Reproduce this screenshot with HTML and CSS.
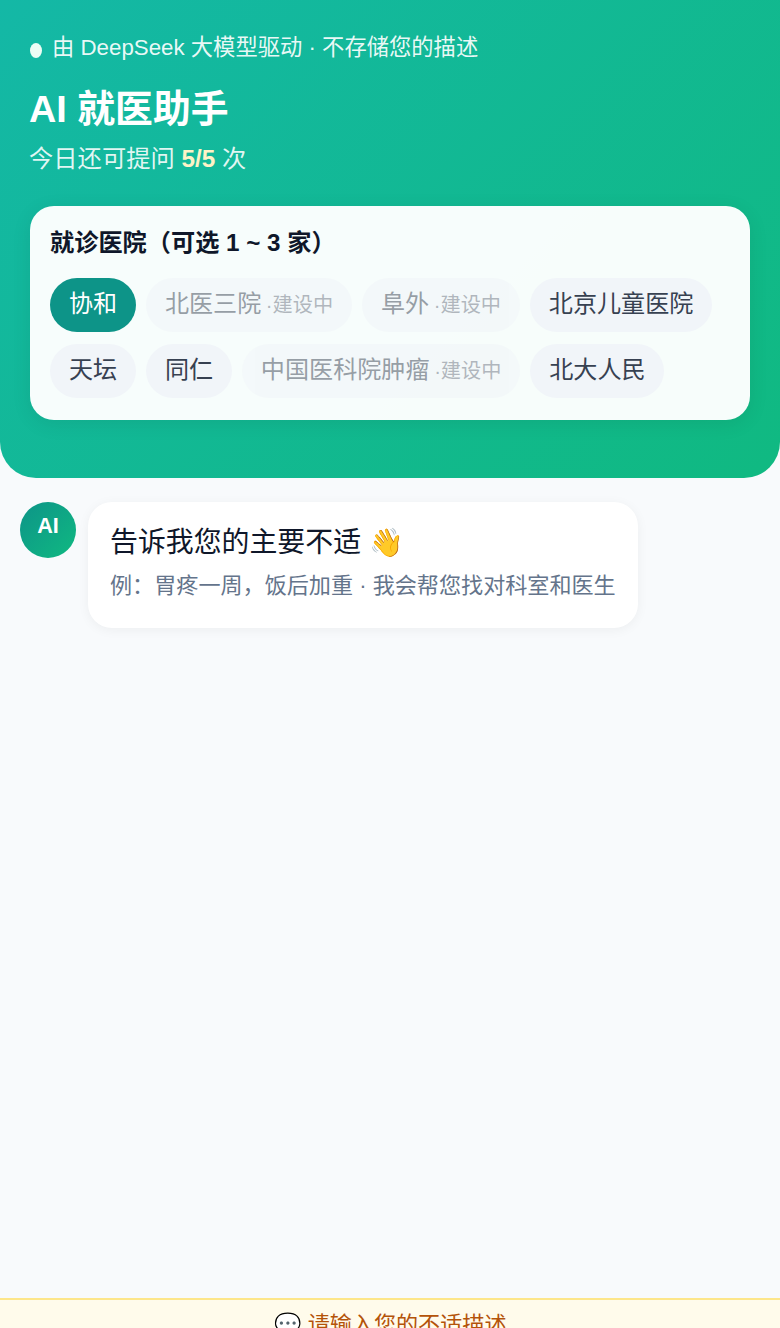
FILE: index.html
```html
<!DOCTYPE html>
<html lang="zh-CN">
<head>
  <meta charset="UTF-8" />
  <meta name="viewport" content="width=device-width, initial-scale=1.0" />
  <title>AI 就医助手</title>
  <link rel="stylesheet" href="styles.css">
</head>
<body>
  <header class="hero">
    <div class="hero-note"><span class="dot"></span><span>由 DeepSeek 大模型驱动 · 不存储您的描述</span></div>
    <h1 class="hero-title">AI 就医助手</h1>
    <p class="hero-quota">今日还可提问 <b>5/5</b> 次</p>

    <section class="hospital-card">
      <div class="hospital-label">就诊医院（可选 1 ~ 3 家）</div>
      <div class="chips">
        <span class="chip active">协和</span>
        <span class="chip off">北医三院<small>·建设中</small></span>
        <span class="chip off">阜外<small>·建设中</small></span>
        <span class="chip">北京儿童医院</span>
        <span class="chip">天坛</span>
        <span class="chip">同仁</span>
        <span class="chip off">中国医科院肿瘤<small>·建设中</small></span>
        <span class="chip">北大人民</span>
      </div>
    </section>
  </header>

  <main class="chat">
    <div class="msg">
      <div class="avatar">AI</div>
      <div class="bubble">
        <div class="bubble-title">告诉我您的主要不适 👋</div>
        <div class="bubble-hint">例：胃疼一周，饭后加重 · 我会帮您找对科室和医生</div>
      </div>
    </div>
  </main>

  <footer class="notice">💬 请输入您的不适描述</footer>
</body>
</html>
```

FILE: styles.css
```css
*,*::before,*::after{box-sizing:border-box;margin:0;padding:0;}
html,body{height:100%;overflow:hidden;}
body{
  font-family:"Liberation Sans","Noto Sans CJK SC",sans-serif;
  background:#f8fafc;
  color:#0f172a;
}
.hero{
  height:478px;
  padding:30px 30px 0;
  background:linear-gradient(135deg,#14b8a6,#10b981);
  border-radius:0 0 36px 36px;
  color:#fff;
}
.hero-note{
  display:flex;align-items:center;gap:10px;
  font-size:22.3px;line-height:36px;
  color:rgba(255,255,255,.92);
}
.dot{
  width:12px;height:15px;
  margin-top:4px;
  border-radius:50%;
  background:#ecfdf5;
}
.hero-title{
  font-size:37.8px;font-weight:700;line-height:50px;
  margin-top:18px;
  margin-left:-1px;
}
.hero-quota{
  font-size:24.3px;line-height:36px;
  margin-top:7px;
  margin-left:-1px;
  color:rgba(255,255,255,.88);
}
.hero-quota b{color:#fef3c7;}
.hospital-card{
  margin-top:29px;
  padding:20px 20px 22px;
  background:rgba(255,255,255,.97);
  border-radius:24px;
  box-shadow:0 4px 20px rgba(0,0,0,.08);
}
.hospital-label{
  font-size:24.2px;font-weight:700;line-height:34px;
  color:#0f172a;
  margin-bottom:18px;
}
.chips{display:flex;flex-wrap:wrap;gap:12px 10px;}
.chip{
  height:54px;
  padding:0 18.9px 8px;
  display:flex;align-items:center;
  border-radius:27px;
  font-size:24.1px;
  background:#f1f5f9;
  color:#374151;
}
.chip small{font-size:20.2px;margin:4px 0 0 4.6px;color:#6b7280;}
.chip.active{background:#0d9488;color:#fff;}
.chip.off{opacity:.5;}
.chat{height:820px;padding:24px 20px;}
.msg{display:flex;gap:12px;align-items:flex-start;}
.avatar{
  width:56px;height:56px;flex:none;
  border-radius:50%;
  background:linear-gradient(135deg,#0d9488,#10b981);
  color:#fff;
  font-size:21.6px;font-weight:700;
  display:flex;align-items:center;justify-content:center;
  padding-bottom:8px;
}
.bubble{
  width:550px;
  padding:21px 22px 24px;
  background:#fff;
  border-radius:24px;
  box-shadow:0 2px 12px rgba(0,0,0,.05);
}
.bubble-title{font-size:27.9px;line-height:40px;color:#0f172a;}
.bubble-hint{font-size:22.1px;line-height:36px;margin-top:5px;color:#64748b;}
.notice{
  height:60px;
  padding-top:9px;
  text-align:center;
  font-size:22.1px;line-height:32px;
  background:#fffbeb;
  border-top:2px solid #fde68a;
  color:#b45309;
}
```
